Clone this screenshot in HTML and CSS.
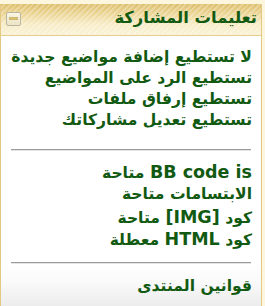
FILE: index.html
```html
<!DOCTYPE html>
<html lang="ar">
<head>
<meta charset="utf-8">
<link rel="stylesheet" href="styles.css">
</head>
<body>
<div class="panel" dir="rtl">
  <div class="panel-head">
    <span class="panel-title">تعليمات المشاركة</span>
    <span class="toggle"><span class="toggle-bar"></span></span>
  </div>
  <div class="panel-body">
    <div class="rules">
      <div class="rule">لا تستطيع إضافة مواضيع جديدة</div>
      <div class="rule">تستطيع الرد على المواضيع</div>
      <div class="rule">تستطيع إرفاق ملفات</div>
      <div class="rule">تستطيع تعديل مشاركاتك</div>
    </div>
    <hr class="sep">
    <div class="rules codes">
      <div class="rule"><span class="latin">BB code is</span> متاحة</div>
      <div class="rule">الابتسامات متاحة</div>
      <div class="rule">كود <span class="latin">[IMG]</span> متاحة</div>
      <div class="rule">كود <span class="latin">HTML</span> معطلة</div>
    </div>
    <hr class="sep sep2">
    <div class="forum-rules">قوانين المنتدى</div>
  </div>
</div>
</body>
</html>
```
FILE: styles.css
```css
html, body {
  margin: 0;
  padding: 0;
}
body {
  background: #fcf6de;
  width: 265px;
  height: 306px;
  overflow: hidden;
  font-family: "DejaVu Sans", sans-serif;
}
.panel {
  margin-top: 4px;
  width: 260px;
  border-left: 1px solid #e3c983;
  border-right: 1px solid #e3c983;
  background: #ffffff;
}
.panel-head {
  height: 31px;
  border-bottom: 1px solid #e5cd8a;
  display: flex;
  align-items: center;
  justify-content: space-between;
  padding: 0 4px 0 5px;
  background:
    repeating-linear-gradient(135deg, rgba(255,255,255,0) 0 2px, rgba(255,255,255,0.25) 2px 4px),
    linear-gradient(to bottom, #ddbf6c 0%, #ebd493 30%, #f7ecc6 65%, #faf2d6 100%);
}
.panel-title {
  font-weight: bold;
  font-size: 16.4px;
  color: #125a12;
  margin-top: -4px;
}
.toggle {
  width: 13px;
  height: 12px;
  border: 1px solid #b9b7a4;
  border-radius: 2px;
  background: linear-gradient(to bottom, #fbf6e4, #ece4c4);
  display: flex;
  align-items: center;
  justify-content: center;
  margin-top: -2px;
}
.toggle-bar {
  width: 7px;
  height: 1px;
  background: #e6c860;
  border: 1px solid #c9b67a;
}
.panel-body {
  padding: 0 9px 0 9px;
}
.rules {
  padding-top: 11px;
}
.rule {
  font-weight: bold;
  font-size: 15.6px;
  line-height: 21px;
  height: 21px;
  color: #125a12;
  white-space: nowrap;
}
.latin {
  font-size: 17.5px;
}
.codes .rule {
  line-height: 22px;
  height: 22.3px;
}
.sep {
  margin: 18px 1px 10px 1px;
  height: 0;
  border: 0;
  border-top: 1px solid #9a9a9a;
  border-bottom: 1px solid #e4e4e4;
}
.sep2 {
  margin-top: 12px;
  margin-bottom: 0;
}
.codes {
  padding-top: 0;
}
.forum-rules {
  margin: 0 -9px;
  padding: 13px 9px 12px 9px;
  font-weight: bold;
  font-size: 15.6px;
  color: #125a12;
  background: linear-gradient(to bottom, #ffffff 0%, #fbfbfb 35%, #ececec 100%);
}
```
